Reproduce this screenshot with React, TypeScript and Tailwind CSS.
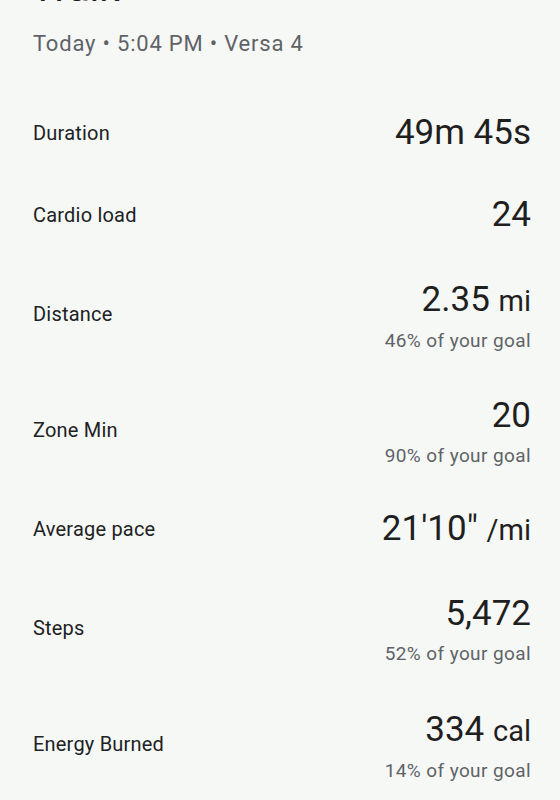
import React from "react";

type Row = {
  label: string;
  value: React.ReactNode;
  sub?: string;
};

const Unit = ({ children }: { children: React.ReactNode }) => (
  <span className="text-[29px]">{children}</span>
);

const rows: Row[] = [
  { label: "Duration", value: <span>49m 45s</span> },
  { label: "Cardio load", value: <span>24</span> },
  {
    label: "Distance",
    value: (
      <span>
        2.35 <Unit>mi</Unit>
      </span>
    ),
    sub: "46% of your goal",
  },
  { label: "Zone Min", value: <span>20</span>, sub: "90% of your goal" },
  {
    label: "Average pace",
    value: (
      <span>
        21'10" <Unit>/mi</Unit>
      </span>
    ),
  },
  { label: "Steps", value: <span>5,472</span>, sub: "52% of your goal" },
  {
    label: "Energy Burned",
    value: (
      <span>
        334 <Unit>cal</Unit>
      </span>
    ),
    sub: "14% of your goal",
  },
];

export default function App() {
  return (
    <div
      className="w-[560px] h-[800px] overflow-hidden bg-[#f6f8f5] text-[#1f1f1f]"
      style={{ fontFamily: "Roboto, 'Noto Sans', sans-serif" }}
    >
      <div className="px-[33px] -mt-[36px]">
        <div className="text-[40px] leading-[48px] text-[#1f1f1f]">Walk</div>
        <div className="mt-[18px] text-[22px] leading-[28px] tracking-[0.8px] text-[#5f6368]">
          Today • 5:04 PM • Versa 4
        </div>
      </div>
      <div className="mt-[34px] pr-[29px] pl-[33px]">
        {rows.map((r) => (
          <div
            key={r.label}
            className={`flex items-center justify-between ${r.sub ? "h-[116px]" : "h-[82px]"}`}
          >
            <div className="text-[20px] tracking-[0.2px] text-[#202124]">{r.label}</div>
            <div className={`flex flex-col items-end ${r.sub ? "mt-[2px]" : ""}`}>
              <div className="text-[35px] leading-[44px] text-[#1f1f1f]">{r.value}</div>
              {r.sub && (
                <div className="mt-[6px] text-[19px] leading-[24px] tracking-[0.4px] text-[#5f6368]">
                  {r.sub}
                </div>
              )}
            </div>
          </div>
        ))}
      </div>
    </div>
  );
}
